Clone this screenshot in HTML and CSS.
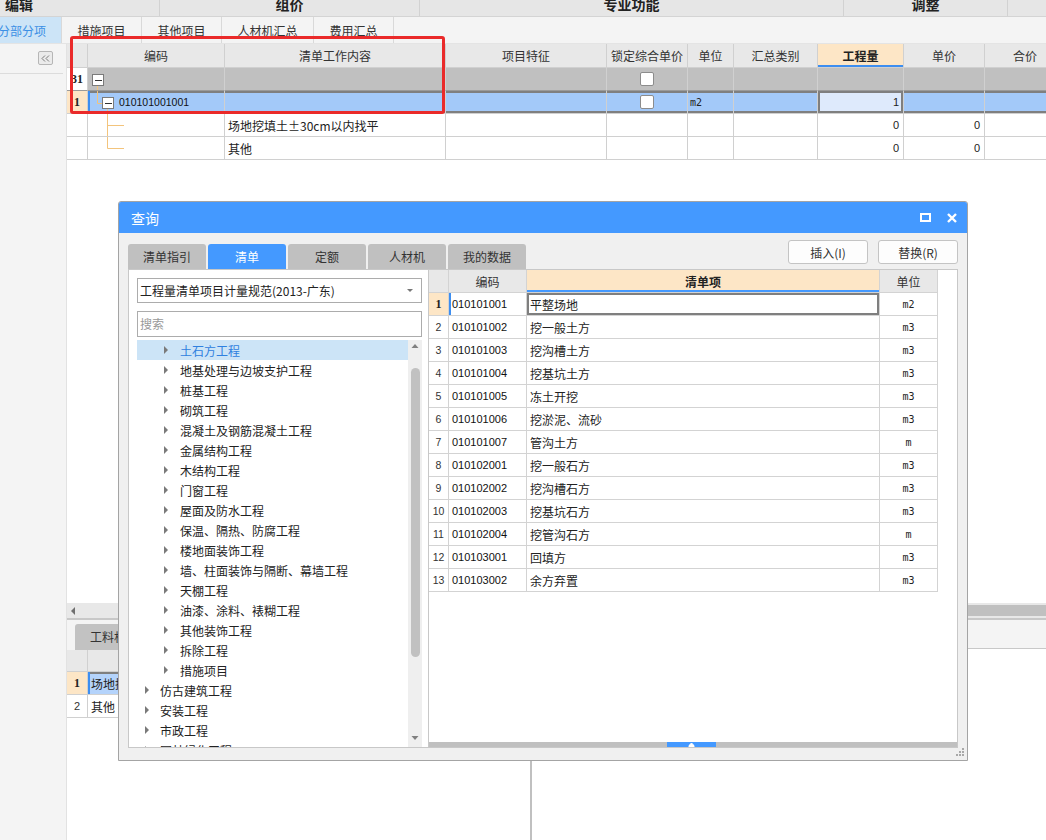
FILE: index.html
```html
<!DOCTYPE html>
<html lang="zh-CN">
<head>
<meta charset="utf-8">
<title>分部分项</title>
<link rel="stylesheet" href="styles.css">
</head>
<body>
<div class="app">
  <div class="menubar">
    <div class="m m1">编辑</div>
    <div class="m m2">组价</div>
    <div class="m m3">专业功能</div>
    <div class="m m4">调整</div>
    <div class="m m5"></div>
  </div>
  <div class="tabbar">
    <div class="tab active w62">分部分项</div>
    <div class="tab w80">措施项目</div>
    <div class="tab w80">其他项目</div>
    <div class="tab w92">人材机汇总</div>
    <div class="tab w80">费用汇总</div>
  </div>
  <div class="body">
    <aside class="sidebar">
      <div class="side-top">
        <span class="collapse"><svg width="9" height="7" viewBox="0 0 9 7"><path d="M4 0.5 L1 3.5 L4 6.5 M8 0.5 L5 3.5 L8 6.5" fill="none" stroke="#7a7a7a" stroke-width="1"/></svg></span>
      </div>
    </aside>
    <main class="main">
      <div class="mgrid">
        <div class="mrow mhead">
          <div class="c rn"></div>
          <div class="c">编码</div>
          <div class="c">清单工作内容</div>
          <div class="c">项目特征</div>
          <div class="c">锁定综合单价</div>
          <div class="c">单位</div>
          <div class="c">汇总类别</div>
          <div class="c qty">工程量</div>
          <div class="c">单价</div>
          <div class="c">合价</div>
        </div>
        <div class="mrow grayrow">
          <div class="c rn b">31</div>
          <div class="c code"><svg class="tr" width="30" height="23" viewBox="0 0 30 23"><path d="M9.5 17 V23" stroke="#f3c47c" fill="none"/><rect x="4.5" y="6.5" width="11" height="11" fill="#fff" stroke="#7a7a7a"/><path d="M7 12.5 H14" stroke="#333"/></svg></div>
          <div class="c"></div>
          <div class="c"></div>
          <div class="c ck"><span class="cb"></span></div>
          <div class="c"></div>
          <div class="c"></div>
          <div class="c"></div>
          <div class="c"></div>
          <div class="c"></div>
        </div>
        <div class="mrow selrow">
          <div class="c rn b">1</div>
          <div class="c code"><svg class="tr" width="30" height="23" viewBox="0 0 30 23"><path d="M9.5 0 V12.5 H14" stroke="#f3c47c" fill="none"/><path d="M19.5 18 V23" stroke="#f3c47c" fill="none"/><rect x="14.5" y="6.5" width="11" height="11" fill="#fff" stroke="#7a7a7a"/><path d="M17 12.5 H24" stroke="#333"/></svg><span class="codetxt">010101001001</span></div>
          <div class="c"></div>
          <div class="c"></div>
          <div class="c ck"><span class="cb"></span></div>
          <div class="c un">m2</div>
          <div class="c"></div>
          <div class="c num focus">1</div>
          <div class="c"></div>
          <div class="c"></div>
        </div>
        <div class="mrow">
          <div class="c rn"></div>
          <div class="c code"><svg class="tr" width="40" height="23" viewBox="0 0 40 23"><path d="M19.5 0 V23 M19.5 11.5 H36" stroke="#f3c47c" fill="none"/></svg></div>
          <div class="c txt">场地挖填土±30cm以内找平</div>
          <div class="c"></div>
          <div class="c"></div>
          <div class="c"></div>
          <div class="c"></div>
          <div class="c num">0</div>
          <div class="c num">0</div>
          <div class="c"></div>
        </div>
        <div class="mrow">
          <div class="c rn"></div>
          <div class="c code"><svg class="tr" width="40" height="23" viewBox="0 0 40 23"><path d="M19.5 0 V11.5 H36" stroke="#f3c47c" fill="none"/></svg></div>
          <div class="c txt">其他</div>
          <div class="c"></div>
          <div class="c"></div>
          <div class="c"></div>
          <div class="c"></div>
          <div class="c num">0</div>
          <div class="c num">0</div>
          <div class="c"></div>
        </div>
      </div>
      <div class="filler"></div>
      <div class="hscroll"><span class="larr"></span><span class="mthumb"></span></div>
      <div class="bottom">
        <div class="bleft">
          <div class="bstrip"><div class="btab">工料机显示</div></div>
          <div class="brow bhead"><div class="c"></div><div class="c"></div><div class="c"></div><div class="c"></div></div>
          <div class="brow bsel"><div class="c rn b">1</div><div class="c nm cur">场地挖填土±30cm以内找平</div><div class="c"></div><div class="c"></div></div>
          <div class="brow"><div class="c rn n">2</div><div class="c nm">其他</div><div class="c"></div><div class="c"></div></div>
        </div>
        <div class="bdiv"></div>
        <div class="bright"><div class="bstrip2"></div></div>
      </div>
    </main>
  </div>

  <div class="annot"></div>

  <div class="dialog">
    <div class="dlg-title">
      <span class="dlg-name">查询</span>
      <div class="dlg-ctrl">
        <svg width="11" height="9" viewBox="0 0 11 9"><rect x="1" y="1" width="9" height="7" fill="none" stroke="#fff" stroke-width="2"/></svg>
        <svg width="10" height="10" viewBox="0 0 10 10"><path d="M1 1 L9 9 M9 1 L1 9" stroke="#fff" stroke-width="2.4"/></svg>
      </div>
    </div>
    <div class="dlg-body">
      <div class="dlg-toolbar">
        <div class="dtabs">
          <div class="dtab">清单指引</div>
          <div class="dtab on">清单</div>
          <div class="dtab">定额</div>
          <div class="dtab">人材机</div>
          <div class="dtab">我的数据</div>
        </div>
        <div class="dbtns">
          <button class="btn">插入(I)</button>
          <button class="btn">替换(R)</button>
        </div>
      </div>
      <div class="panes">
        <div class="lpane">
          <div class="select">工程量清单项目计量规范(2013-广东)<span class="caret"></span></div>
          <div class="search">搜索</div>
          <div class="tree">
            <div class="tlist">
              <div class="ti sel"><span class="arr"></span>土石方工程</div>
              <div class="ti"><span class="arr"></span>地基处理与边坡支护工程</div>
              <div class="ti"><span class="arr"></span>桩基工程</div>
              <div class="ti"><span class="arr"></span>砌筑工程</div>
              <div class="ti"><span class="arr"></span>混凝土及钢筋混凝土工程</div>
              <div class="ti"><span class="arr"></span>金属结构工程</div>
              <div class="ti"><span class="arr"></span>木结构工程</div>
              <div class="ti"><span class="arr"></span>门窗工程</div>
              <div class="ti"><span class="arr"></span>屋面及防水工程</div>
              <div class="ti"><span class="arr"></span>保温、隔热、防腐工程</div>
              <div class="ti"><span class="arr"></span>楼地面装饰工程</div>
              <div class="ti"><span class="arr"></span>墙、柱面装饰与隔断、幕墙工程</div>
              <div class="ti"><span class="arr"></span>天棚工程</div>
              <div class="ti"><span class="arr"></span>油漆、涂料、裱糊工程</div>
              <div class="ti"><span class="arr"></span>其他装饰工程</div>
              <div class="ti"><span class="arr"></span>拆除工程</div>
              <div class="ti"><span class="arr"></span>措施项目</div>
              <div class="ti l1"><span class="arr"></span>仿古建筑工程</div>
              <div class="ti l1"><span class="arr"></span>安装工程</div>
              <div class="ti l1"><span class="arr"></span>市政工程</div>
              <div class="ti l1"><span class="arr"></span>园林绿化工程</div>
            </div>
            <div class="vscroll">
              <svg class="vup" width="14" height="28" viewBox="0 0 14 28"><path d="M3.5 8 L7 4 L10.5 8 Z" fill="#808080"/></svg>
              <span class="vthumb"></span>
              <span class="vgap"></span>
              <svg class="vdn" width="14" height="9" viewBox="0 0 14 9"><path d="M3.5 1 L7 5 L10.5 1 Z" fill="#808080"/></svg>
            </div>
          </div>
        </div>
        <div class="rpane">
          <div class="rgrid">
            <div class="rrow rhead"><div></div><div>编码</div><div class="hl">清单项</div><div>单位</div></div>
            <div class="rrow rsel"><div class="rn pe">1</div><div class="cd edge">010101001</div><div class="nm fc">平整场地</div><div class="un">m2</div></div>
            <div class="rrow"><div class="rn">2</div><div class="cd">010101002</div><div class="nm">挖一般土方</div><div class="un">m3</div></div>
            <div class="rrow"><div class="rn">3</div><div class="cd">010101003</div><div class="nm">挖沟槽土方</div><div class="un">m3</div></div>
            <div class="rrow"><div class="rn">4</div><div class="cd">010101004</div><div class="nm">挖基坑土方</div><div class="un">m3</div></div>
            <div class="rrow"><div class="rn">5</div><div class="cd">010101005</div><div class="nm">冻土开挖</div><div class="un">m3</div></div>
            <div class="rrow"><div class="rn">6</div><div class="cd">010101006</div><div class="nm">挖淤泥、流砂</div><div class="un">m3</div></div>
            <div class="rrow"><div class="rn">7</div><div class="cd">010101007</div><div class="nm">管沟土方</div><div class="un">m</div></div>
            <div class="rrow"><div class="rn">8</div><div class="cd">010102001</div><div class="nm">挖一般石方</div><div class="un">m3</div></div>
            <div class="rrow"><div class="rn">9</div><div class="cd">010102002</div><div class="nm">挖沟槽石方</div><div class="un">m3</div></div>
            <div class="rrow"><div class="rn">10</div><div class="cd">010102003</div><div class="nm">挖基坑石方</div><div class="un">m3</div></div>
            <div class="rrow"><div class="rn">11</div><div class="cd">010102004</div><div class="nm">挖管沟石方</div><div class="un">m</div></div>
            <div class="rrow"><div class="rn">12</div><div class="cd">010103001</div><div class="nm">回填方</div><div class="un">m3</div></div>
            <div class="rrow"><div class="rn">13</div><div class="cd">010103002</div><div class="nm">余方弃置</div><div class="un">m3</div></div>
          </div>
          <div class="rfill"></div>
          <div class="hbar"><span class="hthumb"><svg width="7" height="4" viewBox="0 0 7 4"><path d="M3.5 0 L6 2.5 H1 Z M0.5 3.5 H6.5" fill="#fff" stroke="#fff" stroke-width="1"/></svg></span></div>
        </div>
      </div>
    </div>
    <svg class="grip" width="8" height="8" viewBox="0 0 8 8"><path d="M6 0h2v2h-2z M3 3h2v2h-2z M6 3h2v2h-2z M0 6h2v2h-2z M3 6h2v2h-2z M6 6h2v2h-2z" fill="#a8a8a8"/></svg>
  </div>
</div>
</body>
</html>
```

FILE: styles.css
```css
* { box-sizing: border-box; }
html, body { margin: 0; padding: 0; }
body {
  width: 1046px; height: 840px; overflow: hidden;
  font-family: "Noto Sans CJK SC", "Noto Sans", sans-serif;
  font-size: 12px; color: #222; background: #fff;
}
.app { position: relative; width: 1046px; height: 840px; display: flex; flex-direction: column; overflow: hidden; }

/* top menu */
.menubar { height: 17px; flex: none; display: flex; background: #e6e6e6; border-bottom: 1px solid #d4d4d4; overflow: hidden; }
.menubar .m { height: 16px; line-height: 9px; font-size: 14px; font-weight: bold; color: #222; text-align: center; border-right: 1px solid #d2d2d2; overflow: hidden; white-space: nowrap; }
.menubar .m1 { width: 160px; text-align: left; padding-left: 5px; }
.menubar .m2 { width: 260px; }
.menubar .m3 { width: 424px; }
.menubar .m4 { width: 164px; }
.menubar .m5 { flex: 1; border-right: none; }

/* tabs */
.tabbar { height: 27px; flex: none; display: flex; background: #f4f4f4; border-bottom: 1px solid #e4e4e4; }
.tab { height: 26px; line-height: 27px; text-align: center; color: #333; border-right: 1px solid #d9d9d9; white-space: nowrap; overflow: hidden; }
.tab.active { background: #cce4f7; color: #3b8fe5; text-align: left; text-indent: -2px; }
.w62 { width: 62px; } .w80 { width: 80px; } .w92 { width: 92px; }

/* body */
.body { flex: 1; display: flex; min-height: 0; }
.sidebar { width: 67px; flex: none; background: #f4f4f4; border-right: 1px solid #e2e2e2; }
.side-top { height: 30px; width: 63px; border-bottom: 1px solid #dcdcdc; padding: 7px 0 0 38px; }
.collapse { display: flex; align-items: center; justify-content: center; width: 15px; height: 14px; border: 1px solid #b6b6b6; border-radius: 2px; background: #ebebeb; }

.main { flex: 1; min-width: 0; display: flex; flex-direction: column; overflow: hidden; background: #fff; }

/* main grid */
.mgrid { flex: none; }
.mrow { display: grid; grid-template-columns: 21px 137px 221px 161px 81px 46px 84px 86px 81px 81px; height: 23px; }
.mrow > .c { border-right: 1px solid #d0d0d0; border-bottom: 1px solid #d0d0d0; display: flex; align-items: center; overflow: hidden; white-space: nowrap; min-width: 0; }
.mhead { height: 24px; }
.mhead > .c { background: #e8e8e8; justify-content: center; color: #333; }
.mhead > .qty { background: #fde6c6; font-weight: bold; color: #222; box-shadow: inset 0 -2px #3d8ef0; }
.grayrow > .c { background: #c0c0c0; border-bottom-color: #9a9a9a; }
.grayrow > .rn { background: #fff; }
.selrow > .c { background: #a3c9f9; box-shadow: inset 0 2px #7f7f7f, inset 0 -2px #7f7f7f; }
.selrow > .rn { background: #fde6c6; box-shadow: none; }
.selrow > .code { box-shadow: inset 2px 0 #3d8ef0, inset 0 2px #7f7f7f, inset 0 -2px #7f7f7f; }
.selrow > .focus { background: #deeafc; box-shadow: inset 0 0 0 2px #7f7f7f; }
.mrow > .rn { justify-content: center; }
.b { font-family: "Liberation Serif", serif; font-weight: bold; font-size: 12px; color: #222; }
.tr { flex: none; display: block; }
.codetxt { margin-left: 1px; font-family: "Liberation Sans", sans-serif; font-size: 10.5px; color: #111; }
.mrow > .txt { padding-left: 3px; }
.mrow > .ck { justify-content: center; }
.cb { width: 14px; height: 14px; background: #fff; border: 1px solid #8c8c8c; border-radius: 2px; }
.mrow > .un { padding-left: 2px; font-family: "DejaVu Sans Mono", monospace; font-size: 10px; }
.mrow > .num { justify-content: flex-end; padding-right: 4px; font-family: "Liberation Sans", sans-serif; font-size: 11px; }

.filler { flex: 1; }

/* horizontal scrollbar */
.hscroll { height: 17px; flex: none; display: flex; align-items: center; background: #e8e8e8; border-bottom: 2px solid #c8c8c8; }
.larr { width: 0; height: 0; margin-left: 4px; border-right: 4px solid #6f6f6f; border-top: 4px solid transparent; border-bottom: 4px solid transparent; }
.mthumb { margin-left: auto; width: 560px; height: 11px; background: #c0c0c0; }

/* bottom panels */
.bottom { height: 220px; flex: none; display: flex; }
.bleft { width: 463px; flex: none; }
.bstrip { height: 30px; background: #f4f4f4; padding: 4px 0 0 8px; }
.btab { display: inline-block; height: 26px; line-height: 26px; padding: 0 14px 0 15px; background: #c2c2c2; border-radius: 3px 3px 0 0; color: #333; }
.brow { display: grid; grid-template-columns: 21px 200px 120px 1fr; height: 23px; }
.brow > .c { border-right: 1px solid #d0d0d0; border-bottom: 1px solid #d0d0d0; display: flex; align-items: center; overflow: hidden; white-space: nowrap; }
.bhead { height: 22px; }
.bhead > .c { background: #e8e8e8; }
.brow > .rn { justify-content: center; }
.brow > .rn.n { font-family: "Liberation Sans", sans-serif; font-size: 11px; color: #333; }
.bsel > .rn { background: #fde6c6; }
.brow > .nm { padding-left: 3px; }
.bsel > .cur { background: #b4d3fb; box-shadow: inset 2px 0 #3d8ef0, inset 0 2px #7f7f7f; }
.bdiv { width: 2px; flex: none; background: #c0c0c0; }
.bright { flex: 1; }
.bstrip2 { height: 29px; background: #f4f4f4; border-bottom: 1px solid #c8c8c8; }

/* red annotation */
.annot { position: absolute; left: 70px; top: 36px; width: 375px; height: 78px; border: 3px solid #ea2a2a; border-radius: 3px; }

/* dialog */
.dialog { position: absolute; left: 118px; top: 201px; width: 850px; height: 560px; background: #f0f0f0; border: 1px solid #a4a4a4; border-radius: 3px 3px 0 0; display: flex; flex-direction: column; }
.dlg-title { height: 31px; flex: none; background: #4499ff; display: flex; align-items: center; padding: 0 10px 0 12px; border-radius: 2px 2px 0 0; }
.dlg-name { color: #fff; font-size: 14px; }
.dlg-ctrl { margin-left: auto; display: flex; align-items: center; gap: 16px; }
.dlg-ctrl svg { display: block; }
.dlg-body { flex: 1; padding: 7px 9px 12px 9px; display: flex; flex-direction: column; }
.dlg-toolbar { height: 29px; flex: none; display: flex; }
.dtabs { align-self: flex-end; display: flex; gap: 2px; }
.dtab { width: 78px; height: 25px; line-height: 25px; text-align: center; background: #c0c0c0; color: #333; border-radius: 3px 3px 0 0; }
.dtab.on { background: #4499ff; color: #fff; }
.dbtns { margin-left: auto; align-self: flex-start; display: flex; gap: 10px; }
.btn { width: 80px; height: 24px; padding: 0; background: #fdfdfd; border: 1px solid #c4c4c4; border-radius: 3px; font-family: "Noto Sans CJK SC", "Noto Sans", sans-serif; font-size: 12px; color: #333; }

.panes { height: 479px; flex: none; display: flex; border: 1px solid #c8c8c8; background: #fff; }
.lpane { width: 299px; flex: none; padding: 8px 6px 0 8px; display: flex; flex-direction: column; }
.select { height: 25px; border: 1px solid #acacac; background: #fff; padding-left: 2px; line-height: 23px; white-space: nowrap; display: flex; align-items: center; color: #222; }
.caret { margin-left: auto; margin-right: 8px; width: 0; height: 0; border-top: 3px solid #777; border-left: 3px solid transparent; border-right: 3px solid transparent; }
.search { margin-top: 8px; height: 26px; border: 1px solid #acacac; background: #fff; padding-left: 2px; line-height: 24px; color: #999; }
.tree { margin-top: 3px; height: 407px; display: flex; overflow: hidden; }
.tlist { flex: 1; min-width: 0; overflow: hidden; }
.ti { height: 20px; display: flex; align-items: center; padding-left: 27px; white-space: nowrap; color: #222; }
.ti .arr { flex: none; width: 0; height: 0; border-left: 4px solid #7a7a7a; border-top: 4px solid transparent; border-bottom: 4px solid transparent; margin-right: 12px; }
.ti.l1 { padding-left: 8px; }
.ti.l1 .arr { margin-right: 11px; }
.ti.sel { background: #cce4f7; color: #2f80df; }
.vscroll { width: 14px; flex: none; background: #efefef; display: flex; flex-direction: column; }
.vup, .vdn { display: block; flex: none; }
.vthumb { flex: none; margin-left: 3px; width: 9px; height: 289px; background: #c1c1c1; border-radius: 5px; }
.vgap { flex: 1; }
.vdn { margin-bottom: 3px; }

.rpane { flex: 1; border-left: 1px solid #c8c8c8; display: flex; flex-direction: column; min-width: 0; }
.rgrid { width: 509px; flex: none; }
.rrow { display: grid; grid-template-columns: 20px 78px 353px 58px; height: 23px; }
.rrow > div { border-right: 1px solid #d3d3d3; border-bottom: 1px solid #d3d3d3; display: flex; align-items: center; overflow: hidden; white-space: nowrap; }
.rhead > div { background: #e8e8e8; justify-content: center; color: #333; }
.rhead > .hl { background: #fde6c6; font-weight: bold; color: #222; box-shadow: inset 0 -2px #4499ff; }
.rrow > .rn { justify-content: center; font-family: "Liberation Sans", sans-serif; font-size: 10.5px; color: #333; }
.rrow > .rn.pe { background: #fde6c6; font-family: "Liberation Serif", serif; font-weight: bold; font-size: 12px; color: #222; }
.rrow > .cd { padding-left: 3px; font-family: "Liberation Sans", sans-serif; font-size: 11px; color: #111; }
.rrow > .cd.edge { box-shadow: inset 2px 0 #3d8ef0; }
.rrow > .nm { padding-left: 3px; }
.rrow > .nm.fc { box-shadow: inset 0 0 0 2px #7f7f7f; }
.rrow > .un { justify-content: center; font-family: "DejaVu Sans Mono", monospace; font-size: 10px; color: #222; }
.rfill { flex: 1; }
.hbar { height: 5px; flex: none; background: #c0c0c0; display: flex; }
.hthumb { margin-left: 238px; width: 49px; height: 5px; background: #4499ff; display: flex; align-items: center; justify-content: center; }
.hthumb svg { display: block; }
.grip { position: absolute; right: 3px; bottom: 4px; display: block; }
```
